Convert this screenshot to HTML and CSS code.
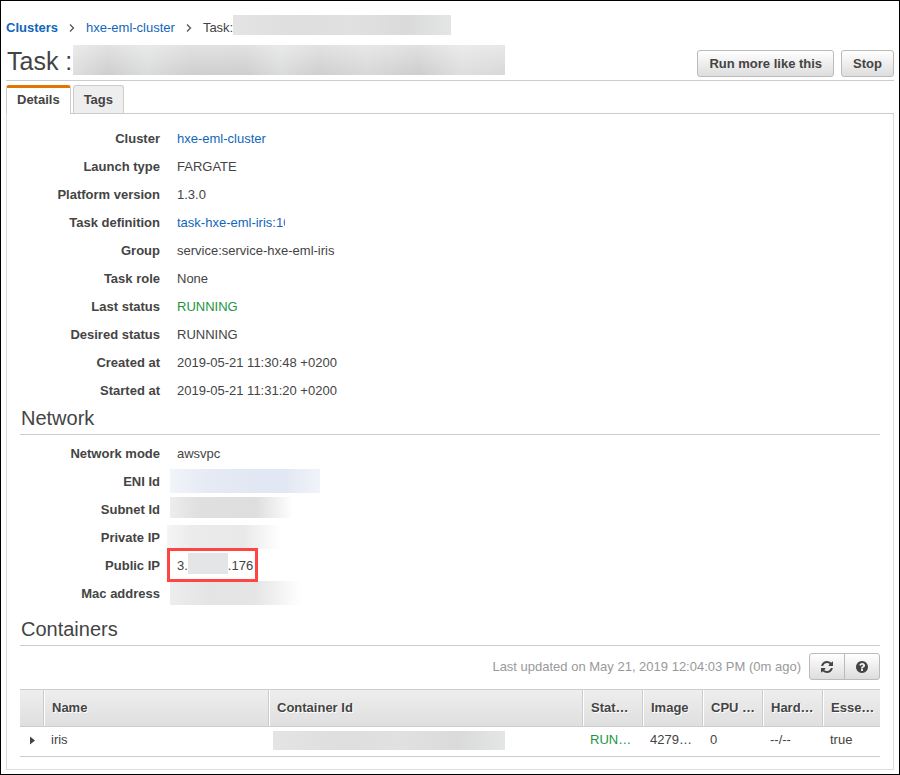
FILE: index.html
```html
<!DOCTYPE html>
<html lang="en">
<head>
<meta charset="utf-8">
<title>Task details</title>
<link rel="stylesheet" href="styles.css">
</head>
<body>
<div class="page">
  <nav class="breadcrumb" aria-label="Breadcrumb">
    <a class="root" href="#">Clusters</a>
    <svg class="chevron" viewBox="0 0 6 8" aria-hidden="true"><path d="M1 .5 4.500 4 1 7.500"/></svg>
    <a href="#">hxe-eml-cluster</a>
    <svg class="chevron" viewBox="0 0 6 8" aria-hidden="true"><path d="M1 .5 4.500 4 1 7.500"/></svg>
    <span class="current">Task:<span class="mask mask-crumb"></span></span>
  </nav>

  <header class="title-bar">
    <h1>Task :<span class="mask mask-title"></span></h1>
    <div class="actions">
      <button class="btn" type="button">Run more like this</button>
      <button class="btn" type="button">Stop</button>
    </div>
  </header>

  <div class="tabs" role="tablist">
    <button class="tab active" type="button" role="tab" aria-selected="true">Details</button>
    <button class="tab" type="button" role="tab" aria-selected="false">Tags</button>
  </div>

  <main class="panel">
    <dl class="props">
      <dt>Cluster</dt><dd><a href="#">hxe-eml-cluster</a></dd>
      <dt>Launch type</dt><dd>FARGATE</dd>
      <dt>Platform version</dt><dd>1.3.0</dd>
      <dt>Task definition</dt><dd><a class="cut" href="#">task-hxe-eml-iris:10</a></dd>
      <dt>Group</dt><dd>service:service-hxe-eml-iris</dd>
      <dt>Task role</dt><dd>None</dd>
      <dt>Last status</dt><dd class="running">RUNNING</dd>
      <dt>Desired status</dt><dd>RUNNING</dd>
      <dt>Created at</dt><dd>2019-05-21 11:30:48 +0200</dd>
      <dt>Started at</dt><dd>2019-05-21 11:31:20 +0200</dd>
    </dl>

    <h2>Network</h2>
    <dl class="props">
      <dt>Network mode</dt><dd>awsvpc</dd>
      <dt>ENI Id</dt><dd><span class="mask mask-eni"></span></dd>
      <dt>Subnet Id</dt><dd><span class="mask mask-subnet"></span></dd>
      <dt>Private IP</dt><dd><span class="mask mask-private"></span></dd>
      <dt>Public IP</dt><dd><span class="highlight">3.<span class="mask mask-ip"></span>.176</span></dd>
      <dt>Mac address</dt><dd><span class="mask mask-mac"></span></dd>
    </dl>

    <h2 class="spaced">Containers</h2>
    <div class="toolbar">
      <span class="updated">Last updated on May 21, 2019 12:04:03 PM (0m ago)</span>
      <div class="btn-group">
        <button class="btn icon-btn" type="button" aria-label="Refresh">
          <svg viewBox="0 0 1792 1792" aria-hidden="true"><path d="M1639 1056q0 5-1 7-64 268-268 434.500t-478 166.500q-146 0-282.500-55t-243.500-157l-129 129q-19 19-45 19t-45-19-19-45v-448q0-26 19-45t45-19h448q26 0 45 19t19 45-19 45l-137 137q71 66 161 102t187 36q134 0 250-65t186-179q11-17 53-117 8-23 30-23h192q13 0 22.500 9.500t9.500 22.500zm25-800v448q0 26-19 45t-45 19h-448q-26 0-45-19t-19-45 19-45l138-138q-148-137-349-137-134 0-250 65t-186 179q-11 17-53 117-8 23-30 23h-199q-13 0-22.500-9.500t-9.500-22.500v-7q65-268 270-434.500t480-166.500q146 0 284 55.500t245 156.500l130-129q19-19 45-19t45 19 19 45z"/></svg>
        </button>
        <button class="btn icon-btn" type="button" aria-label="Help">
          <svg viewBox="0 0 1792 1792" aria-hidden="true"><path d="M1024 1376v-192q0-14-9-23t-23-9h-192q-14 0-23 9t-9 23v192q0 14 9 23t23 9h192q14 0 23-9t9-23zm256-672q0-88-55.500-163t-138.500-116-170-41q-243 0-371 213-15 24 8 42l132 100q7 6 19 6 16 0 25-12 53-68 86-92 34-24 86-24 48 0 85.500 26t37.500 59q0 38-20 61t-68 45q-63 28-115.500 86.500t-52.500 125.500v36q0 14 9 23t23 9h192q14 0 23-9t9-23q0-19 21.500-49.500t54.500-49.500q32-18 49-28.500t46-35 44.500-48 28-60.500 12.500-81zm384 192q0 209-103 385.500t-279.500 279.500-385.500 103-385.500-103-279.500-279.500-103-385.500 103-385.500 279.500-279.500 385.500-103 385.500 103 279.500 279.500 103 385.500z"/></svg>
        </button>
      </div>
    </div>

    <table class="containers">
      <colgroup>
        <col class="c-toggle"><col class="c-name"><col><col class="c-small"><col class="c-small"><col class="c-small"><col class="c-small"><col class="c-last">
      </colgroup>
      <thead>
        <tr><th></th><th>Name</th><th>Container Id</th><th>Stat…</th><th>Image</th><th>CPU …</th><th>Hard…</th><th>Esse…</th></tr>
      </thead>
      <tbody>
        <tr>
          <td><button class="expander" type="button" aria-label="Expand iris"></button></td>
          <td>iris</td>
          <td><span class="mask mask-container"></span></td>
          <td class="running">RUN…</td>
          <td>4279…</td>
          <td>0</td>
          <td>--/--</td>
          <td>true</td>
        </tr>
      </tbody>
    </table>
  </main>
</div>
</body>
</html>
```

FILE: styles.css
```css
* {
  box-sizing: border-box;
}

body {
  margin: 0;
  background: #fff;
  color: #444;
  font-family: "Liberation Sans", Arial, sans-serif;
  font-size: 13px;
}

.page {
  min-height: 100vh;
  padding: 14px 5px 4px;
  border: 1px solid #000;
}

a {
  color: #1166bb;
  text-decoration: none;
}

.running {
  color: #1a9641;
}

/* Redacted values */
.mask {
  display: block;
  flex: none;
  background: linear-gradient(90deg, #e4e4e4, #dedede 30%, #e1e1e1 55%, #dadada 80%, #e4e6e6);
}

/* Breadcrumb */
.breadcrumb {
  display: flex;
  align-items: flex-start;
  height: 30px;
  line-height: 25px;
}

.breadcrumb .root {
  font-weight: bold;
}

.chevron {
  width: 6px;
  height: 8px;
  margin: 9px 11px 0;
  fill: none;
  stroke: #555;
  stroke-width: 1.3;
}

.current {
  display: flex;
}

.mask-crumb {
  width: 218px;
  height: 20px;
}

/* Title */
.title-bar {
  display: flex;
  justify-content: space-between;
  align-items: flex-end;
  border-bottom: 1px solid #ccc;
}

h1 {
  display: flex;
  margin: 0;
  padding: 0 0 2px 1px;
  font-size: 25px;
  font-weight: normal;
  line-height: 33px;
}

.mask-title {
  width: 432px;
  height: 30px;
  margin-left: 1px;
  background:
    linear-gradient(180deg, rgba(255, 255, 255, 0.4), rgba(255, 255, 255, 0)),
    linear-gradient(90deg, #dedede, #cecece 8%, #dadbdb 17%, #cfcfcf 27%, #cecece 40%, #dadbdb 48%, #cfcfcf 57%, #d8d8d8 68%, #cdcdcd 80%, #dedede 90%, #d8d8d8);
}

.actions {
  display: flex;
  gap: 7px;
  margin-bottom: 3px;
}

.btn {
  height: 27px;
  padding: 0 11px;
  border: 1px solid #bbb;
  border-radius: 3px;
  background: linear-gradient(#fff, #ddd);
  color: #444;
  font: bold 13px "Liberation Sans", Arial, sans-serif;
}

/* Tabs */
.tabs {
  display: flex;
  gap: 2px;
  margin-top: 4px;
}

.tab {
  height: 28px;
  padding: 0 10px;
  border: 1px solid #ccc;
  border-bottom: 0;
  border-radius: 3px 3px 0 0;
  background: #eee;
  color: #444;
  font: bold 13px "Liberation Sans", Arial, sans-serif;
}

.tab.active {
  height: 29px;
  margin-bottom: -1px;
  padding-bottom: 3px;
  border-top: 3px solid #e07700;
  background: #fff;
  z-index: 1;
}

.panel {
  padding: 10px 13px 12px;
  border: 1px solid #ddd;
  border-top-color: #ccc;
}

/* Property lists */
.props {
  display: grid;
  grid-template-columns: 140px 1fr;
  grid-auto-rows: 28px;
  column-gap: 17px;
  margin: 0;
  line-height: 30px;
}

dt {
  font-weight: bold;
  text-align: right;
}

dd {
  margin: 0;
}

.cut {
  display: block;
  width: 108px;
  overflow: hidden;
  white-space: nowrap;
}

dd .mask {
  margin: 2px 0 0 -7px;
}

dd .mask-eni {
  width: 150px;
  height: 24px;
  background: linear-gradient(90deg, #f1f4f9, #e5eaf4 25%, #e1e7f3 75%, #f0f3f9);
}

dd .mask-subnet {
  width: 123px;
  height: 21px;
  background: linear-gradient(90deg, #ededed, #e0e0e0 22%, #dedede 70%, #fff);
}

dd .mask-private {
  width: 118px;
  height: 24px;
  margin-left: -10px;
  background: linear-gradient(90deg, #f5f5f5, #ebebeb 22%, #e9e9e9 65%, #fff 96%);
}

dd .mask-mac {
  width: 131px;
  height: 24px;
  background: linear-gradient(90deg, #ededed, #e4e4e4 30%, #e5e5e5 65%, #fff);
}

.highlight {
  position: relative;
  display: flex;
  width: max-content;
  height: 34px;
  margin: -3px 0 0 -10px;
  padding: 0 2px 0 7px;
  border: 3px solid #f44;
}

dd .mask-ip {
  width: 40px;
  height: 21px;
  margin: 2px 0 0;
  background: #e4e5e6;
}

/* Section headings */
h2 {
  margin: 0 0 4px;
  padding: 0 0 2px 1px;
  border-bottom: 1px solid #ccc;
  font-size: 20px;
  font-weight: normal;
  line-height: 28px;
}

h2.spaced {
  margin-top: 8px;
}

/* Containers */
.toolbar {
  display: flex;
  justify-content: flex-end;
  align-items: center;
  gap: 8px;
  margin: 7px 0 9px;
}

.updated {
  color: #999;
}

.btn-group {
  display: flex;
}

.icon-btn {
  display: flex;
  align-items: center;
  justify-content: center;
  width: 36px;
  padding: 0;
}

.icon-btn:first-child {
  border-radius: 3px 0 0 3px;
}

.icon-btn:last-child {
  margin-left: -1px;
  border-radius: 0 3px 3px 0;
}

.icon-btn svg {
  width: 14px;
  height: 14px;
  fill: #444;
}

.containers {
  width: 100%;
  table-layout: fixed;
  border-collapse: separate;
  border-spacing: 0;
}

.c-toggle {
  width: 24px;
}

.c-name {
  width: 225px;
}

.c-small {
  width: 60px;
}

.c-last {
  width: 57px;
}

th {
  height: 38px;
  padding: 0 0 2px 8px;
  border: 1px solid #ccc;
  border-width: 1px 1px 1px 0;
  background: linear-gradient(#eee, #dfdfdf);
  box-shadow: inset 1px 0 #fff;
  text-align: left;
  text-shadow: 1px 1px #fff;
  white-space: nowrap;
}

th:first-child {
  box-shadow: none;
}

th:last-child {
  border-right: 0;
}

td {
  height: 30px;
  padding: 0 0 4px 7px;
  border-bottom: 1px solid #ccc;
  white-space: nowrap;
}

.expander {
  display: block;
  width: 14px;
  height: 14px;
  margin: 2px 0 0;
  padding: 0;
  border: 0;
  background: #444;
  clip-path: polygon(3px 3px, 8px 7px, 3px 11px);
}

.mask-container {
  width: 232px;
  height: 19px;
  margin: 2px 0 0 -3px;
}
```
